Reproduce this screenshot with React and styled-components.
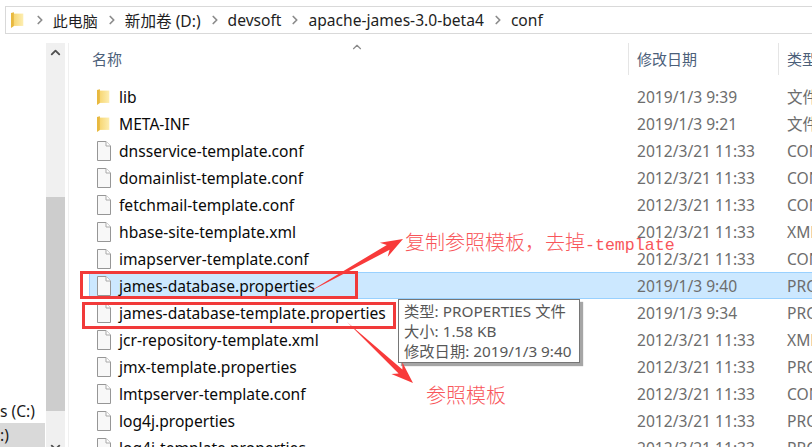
import React from "react"
import styled, { createGlobalStyle } from "styled-components"
import { FiChevronRight, FiChevronUp, FiChevronDown } from "react-icons/fi"

const UI_FONT = `"Noto Sans", "Noto Sans CJK SC", sans-serif`

const files = [
  { name: "lib", date: "2019/1/3 9:39", type: "文件夹", folder: true },
  { name: "META-INF", date: "2019/1/3 9:21", type: "文件夹", folder: true },
  { name: "dnsservice-template.conf", date: "2012/3/21 11:33", type: "CONF 文件" },
  { name: "domainlist-template.conf", date: "2012/3/21 11:33", type: "CONF 文件" },
  { name: "fetchmail-template.conf", date: "2012/3/21 11:33", type: "CONF 文件" },
  { name: "hbase-site-template.xml", date: "2012/3/21 11:33", type: "XML 文档" },
  { name: "imapserver-template.conf", date: "2012/3/21 11:33", type: "CONF 文件" },
  { name: "james-database.properties", date: "2019/1/3 9:40", type: "PROPERTIES 文件", selected: true },
  { name: "james-database-template.properties", date: "2019/1/3 9:34", type: "PROPERTIES 文件" },
  { name: "jcr-repository-template.xml", date: "2012/3/21 11:33", type: "XML 文档" },
  { name: "jmx-template.properties", date: "2012/3/21 11:33", type: "PROPERTIES 文件" },
  { name: "lmtpserver-template.conf", date: "2012/3/21 11:33", type: "CONF 文件" },
  { name: "log4j.properties", date: "2012/3/21 11:33", type: "PROPERTIES 文件" },
  { name: "log4j-template.properties", date: "2012/3/21 11:33", type: "PROPERTIES 文件" },
]

const crumbs = ["此电脑", "新加卷 (D:)", "devsoft", "apache-james-3.0-beta4", "conf"]

const FolderIcon = ({ size = 16 }) => (
  <svg width={size * 0.8} height={size} viewBox="0 0 13 16">
    <defs>
      <linearGradient id="folderFill" x1="0" x2="1" y1="0" y2="0">
        <stop offset="0" stopColor="#f7d774" />
        <stop offset="1" stopColor="#fdeeb2" />
      </linearGradient>
    </defs>
    <path d="M0 1 L3 0 L3 14 L0 16 Z" fill="#e8b93f" />
    <path d="M3 1.5 H12.5 V14 H3 Z" fill="url(#folderFill)" />
  </svg>
)

const FileIcon = () => (
  <svg width="14" height="20" viewBox="0 0 14 20">
    <path d="M.5.5 H9 L13.5 5 V19.5 H.5 Z" fill="#f8f8f8" stroke="#969696" />
    <path d="M9 .5 V5 H13.5" fill="#fff" stroke="#a8a8a8" />
  </svg>
)

// tapered hand-drawn arrow: thin tail, wider neck, notched head
const Arrow = ({ from, to }) => {
  const [x1, y1] = from
  const [x2, y2] = to
  const len = Math.hypot(x2 - x1, y2 - y1)
  const ux = (x2 - x1) / len
  const uy = (y2 - y1) / len
  const at = (along, side) =>
    `${(x1 + ux * along - uy * side).toFixed(1)},${(y1 + uy * along + ux * side).toFixed(1)}`
  const neck = len - 17
  const points = [
    at(0, 0),
    at(neck, 2.8),
    at(neck - 5, 8),
    at(len, 0),
    at(neck - 5, -8),
    at(neck, -2.8),
  ].join(" ")
  return <polygon points={points} fill="#f83a3a" />
}

const GlobalStyle = createGlobalStyle`
  html, body {
    margin: 0;
    background: #fff;
    overflow: hidden;
  }
`

const Page = styled.div`
  position: relative;
  width: 812px;
  height: 447px;
  overflow: hidden;
  background: #fff;
  font-family: ${UI_FONT};
  font-size: 15.6px;
`

const AddressBar = styled.div`
  display: flex;
  align-items: center;
  height: 26px;
  margin: 6px -20px 0 5px;
  padding-left: 5px;
  border: 1px solid #d9d9d9;
  color: #1e1e1e;
  > svg {
    margin-right: 2px;
  }
`

const Crumb = styled.span`
  display: flex;
  align-items: center;
  white-space: nowrap;
  &:nth-of-type(1) {
    font-size: 15px;
  }
  svg {
    margin: 0 6px 0 7px;
    color: #8c8c8c;
  }
`

const Body = styled.div`
  display: flex;
  height: 404px;
  margin-top: 9px;
`

const NavPane = styled.div`
  display: flex;
  flex-direction: column;
  justify-content: flex-end;
  width: 45px;
  margin-right: 1px;
  overflow: hidden;
  color: #1a1a1a;
`

const NavItem = styled.div`
  display: flex;
  align-items: center;
  height: 24px;
  background: ${(p) => (p.$active ? "#d9d9d9" : "transparent")};
`

const ScrollTrack = styled.div`
  display: flex;
  flex-direction: column;
  align-items: center;
  width: 19px;
  background: #f0f0f0;
  color: #505050;
`

const ScrollArrow = styled.div`
  display: flex;
  justify-content: center;
  height: 20px;
  padding-top: 2px;
  &:last-child {
    margin-top: auto;
    margin-bottom: -13px;
  }
`

const ScrollThumb = styled.div`
  width: 100%;
  height: 214px;
  margin-top: 132px;
  background: #cdcdcd;
`

const Main = styled.div`
  flex: 1;
  min-width: 0;
  margin-left: 3px;
  border-left: 1px solid #f0f0f0;
`

const Columns = styled.div`
  display: grid;
  grid-template-columns: 540px 150px 100px;
  margin-left: 20px;
`

const HeaderRow = styled(Columns)`
  position: relative;
  height: 32px;
  margin-bottom: 8px;
  color: #4c607a;
  font-size: 15px;
`

const HeaderCell = styled.div`
  display: flex;
  align-items: center;
  padding: 0 0 2px ${(p) => (p.$first ? "3px" : "8px")};
  border-right: ${(p) => (p.$last ? "none" : "1px solid #e5e5e5")};
  white-space: nowrap;
`

const SortCaret = styled.div`
  position: absolute;
  left: 261px;
  top: -5px;
  color: #8a8a8a;
`

const Row = styled(Columns)`
  grid-template-columns: 539px 150px 100px;
  height: 27px;
  box-sizing: border-box;
  align-items: center;
  border: 1px solid ${(p) => (p.$selected ? "#99d1ff" : "transparent")};
  border-right: none;
  background: ${(p) => (p.$selected ? "#cce8ff" : "transparent")};
`

const NameCell = styled.div`
  display: flex;
  align-items: center;
  color: #0a0a0a;
  white-space: nowrap;
`

const IconSlot = styled.span`
  display: flex;
  justify-content: flex-start;
  width: 22px;
  padding-left: 7px;
`

const InfoCell = styled.div`
  padding-left: 8px;
  color: #6d6d6d;
  white-space: nowrap;
`

const Markup = styled.svg`
  position: absolute;
  left: 0;
  top: 0;
  pointer-events: none;
`

const RedBox = styled.div`
  position: absolute;
  left: ${(p) => p.$x}px;
  top: ${(p) => p.$y}px;
  width: ${(p) => p.$w}px;
  height: ${(p) => p.$h}px;
  box-sizing: border-box;
  border: 3px solid #f13a3a;
`

const Note = styled.div`
  position: absolute;
  left: ${(p) => p.$x}px;
  top: ${(p) => p.$y}px;
  color: #f8565a;
  font-family: "Noto Sans CJK SC", sans-serif;
  font-size: 20px;
  font-weight: 300;
  line-height: 24px;
  white-space: nowrap;
`

const NoteMono = styled.span`
  font-family: "Liberation Mono", monospace;
  font-size: 16.6px;
`

const Tooltip = styled.div`
  position: absolute;
  left: 398px;
  top: 299px;
  width: 182px;
  height: 64px;
  padding: 1px 0 0 5px;
  box-sizing: border-box;
  border: 1px solid #767676;
  background: #fff;
  box-shadow: 3px 3px 1px rgba(0, 0, 0, 0.35);
  color: #575757;
  font-size: 15.3px;
  line-height: 20px;
  white-space: nowrap;
`

export default function App() {
  return (
    <Page>
      <GlobalStyle />
      <AddressBar>
        <FolderIcon />
        {crumbs.map((c) => (
          <Crumb key={c}>
            <FiChevronRight size={14} strokeWidth={3} />
            {c}
          </Crumb>
        ))}
      </AddressBar>
      <Body>
        <NavPane>
          <NavItem>s (C:)</NavItem>
          <NavItem $active>:)</NavItem>
        </NavPane>
        <ScrollTrack>
          <ScrollArrow>
            <FiChevronUp size={15} strokeWidth={3} />
          </ScrollArrow>
          <ScrollThumb />
          <ScrollArrow>
            <FiChevronDown size={15} strokeWidth={3} />
          </ScrollArrow>
        </ScrollTrack>
        <Main>
          <HeaderRow>
            <HeaderCell $first>名称</HeaderCell>
            <HeaderCell>修改日期</HeaderCell>
            <HeaderCell $last>类型</HeaderCell>
            <SortCaret>
              <FiChevronUp size={14} />
            </SortCaret>
          </HeaderRow>
          {files.map((f) => (
            <Row key={f.name} $selected={f.selected}>
              <NameCell>
                <IconSlot>{f.folder ? <FolderIcon /> : <FileIcon />}</IconSlot>
                {f.name}
              </NameCell>
              <InfoCell>{f.date}</InfoCell>
              <InfoCell>{f.type}</InfoCell>
            </Row>
          ))}
        </Main>
      </Body>

      <Tooltip>
        <div>类型: PROPERTIES 文件</div>
        <div>大小: 1.58 KB</div>
        <div>修改日期: 2019/1/3 9:40</div>
      </Tooltip>
      <RedBox $x={80} $y={271} $w={278} $h={28} />
      <RedBox $x={82} $y={302} $w={314} $h={27} />
      <Markup width="812" height="447">
        <Arrow from={[307, 293]} to={[403, 239]} />
        <Arrow from={[347, 322]} to={[413, 383]} />
      </Markup>
      <Note $x={405} $y={230}>
        复制参照模板，去掉<NoteMono>-template</NoteMono>
      </Note>
      <Note $x={426} $y={383}>
        参照模板
      </Note>
    </Page>
  )
}
